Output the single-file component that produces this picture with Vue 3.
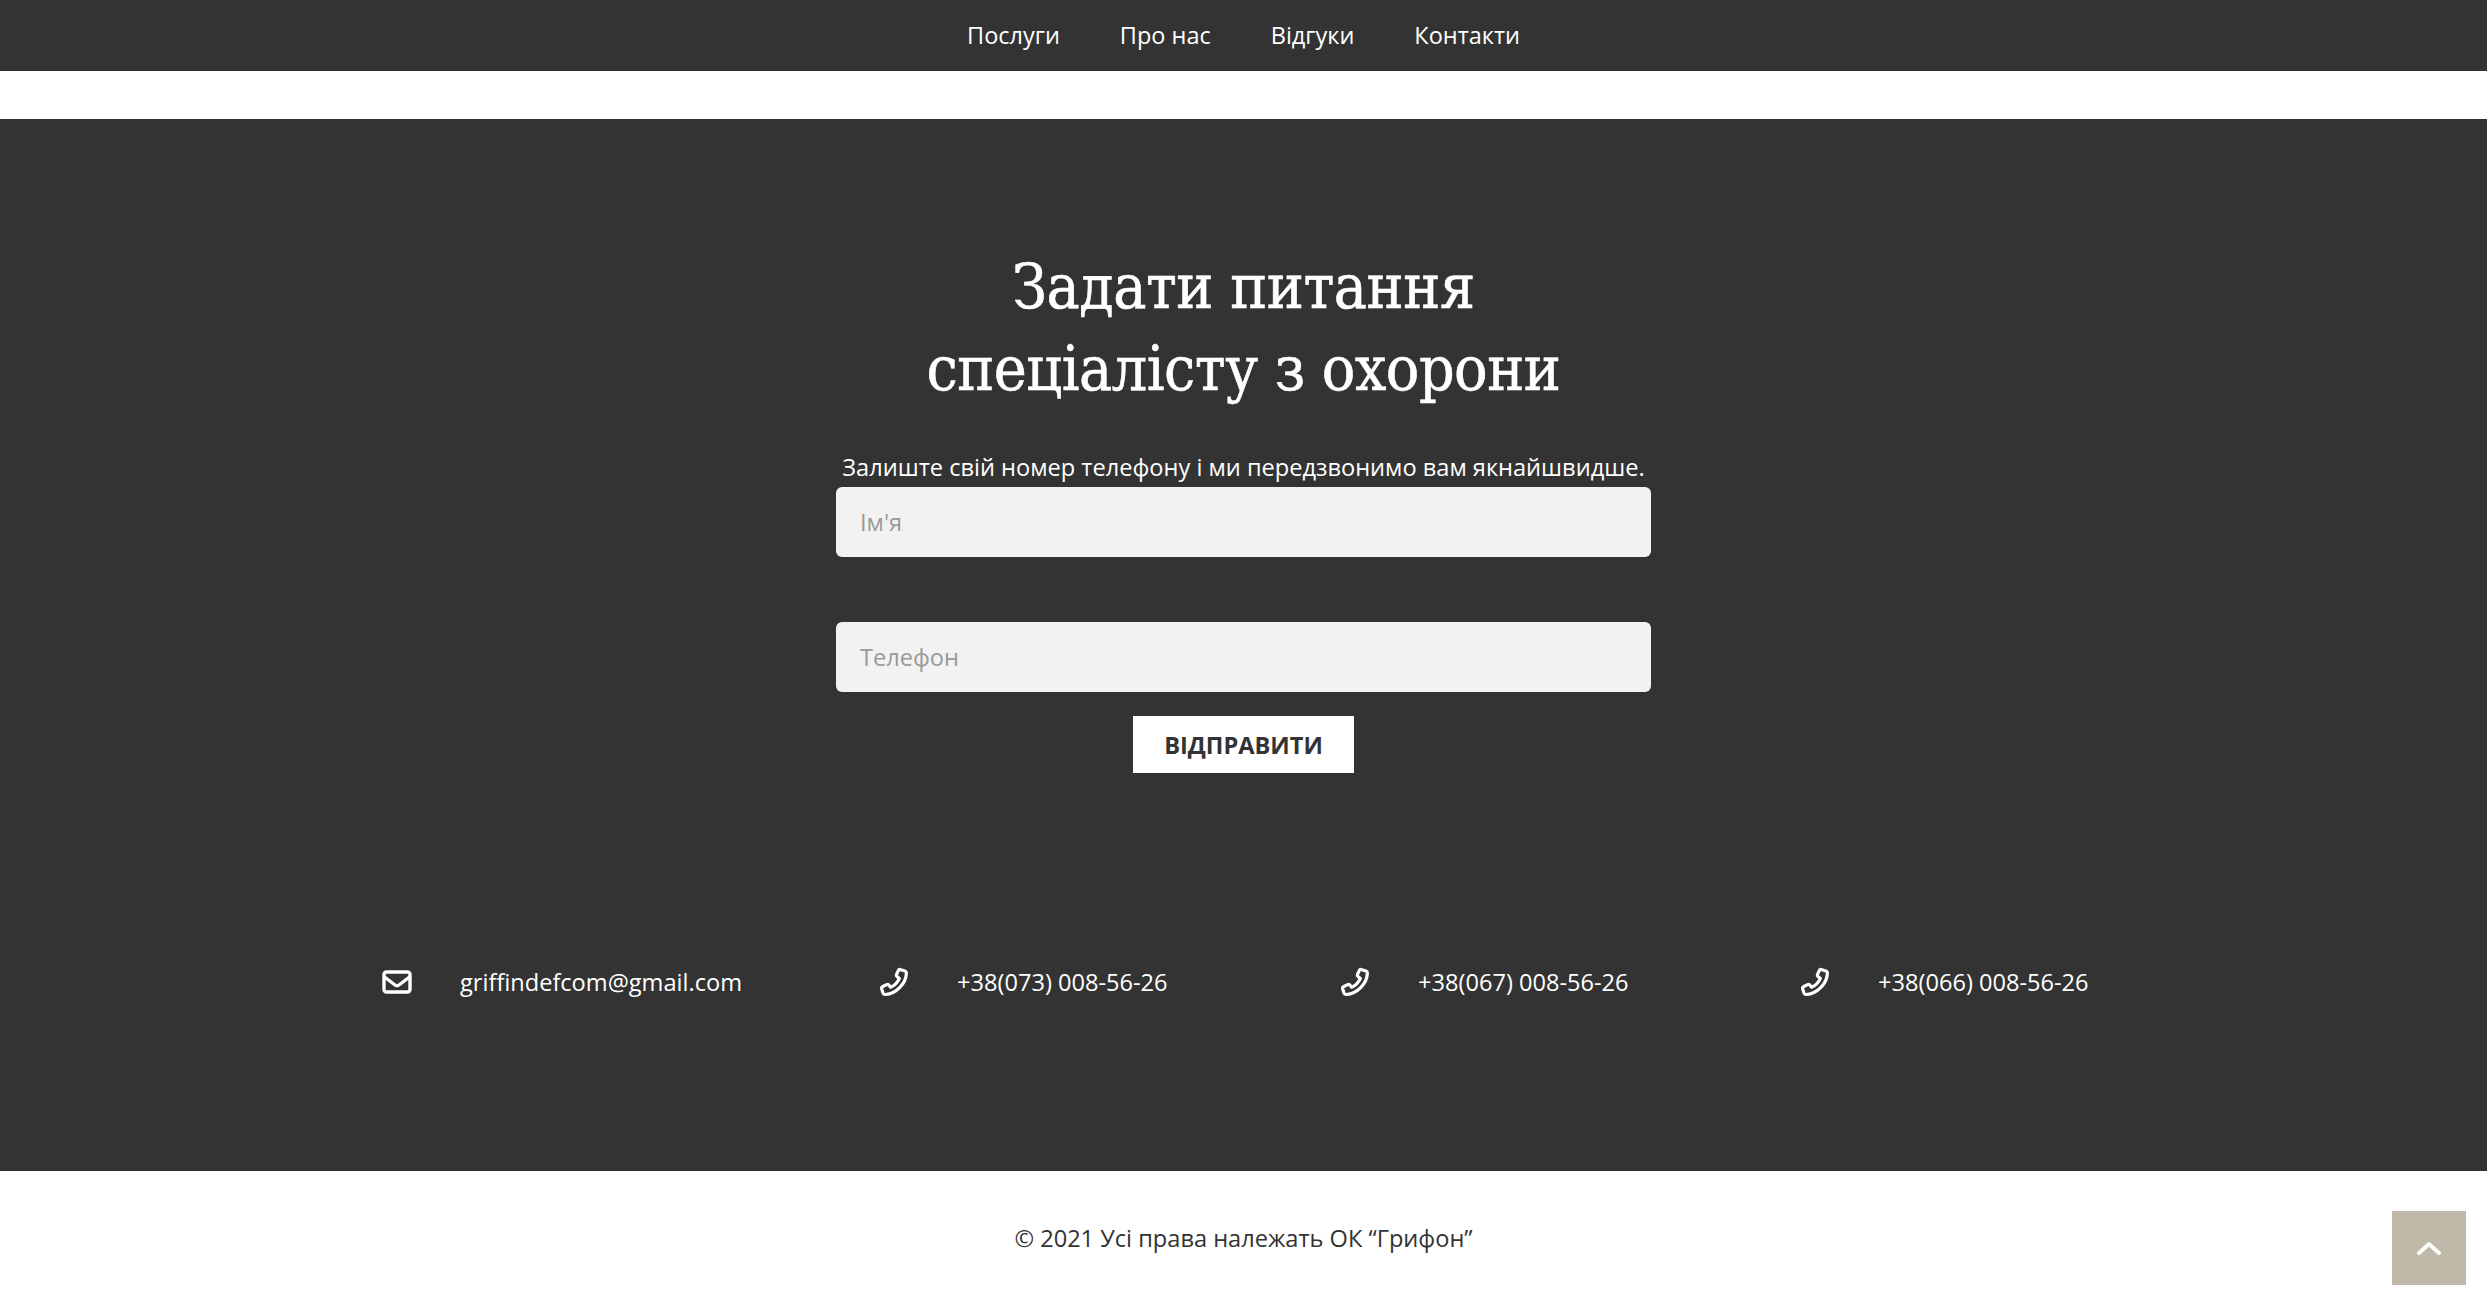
<template>
  <div class="page">
    <nav class="nav">
      <a v-for="item in navItems" :key="item" class="nav-link">{{ item }}</a>
    </nav>

    <section class="contact">
      <h2 class="title">Задати питання<br>спеціалісту з охорони</h2>
      <p class="lead">Залиште свій номер телефону і ми передзвонимо вам якнайшвидше.</p>
      <form class="form" @submit.prevent>
        <input class="field" type="text" placeholder="Ім'я">
        <input class="field" type="text" placeholder="Телефон">
        <button class="submit" type="submit">ВІДПРАВИТИ</button>
      </form>

      <div class="links">
        <div v-for="link in links" :key="link.text" class="link">
          <svg v-if="link.icon === 'mail'" class="icon" viewBox="0 0 30 30" fill="none" stroke="#fff" stroke-width="3.4" stroke-linejoin="round" stroke-linecap="round">
            <rect x="2" y="5" width="26" height="20" rx="2.5" />
            <path d="M2.5 10 L13 18 Q15 19.5 17 18 L27.5 10" />
          </svg>
          <svg v-else class="icon" viewBox="0 0 30 30" fill="none" stroke="#fff" stroke-width="3.2" stroke-linejoin="round" stroke-linecap="round">
            <path d="M21 2.5 L26 4 Q27.5 4.6 27.4 6.4 C26.8 17 17 27 6.5 27.5 Q4.6 27.6 4 26 L2.6 21.8 Q2.2 20.4 3.4 19.7 L7.6 17.6 Q8.9 17 9.8 18 L11.6 20.2 C15.5 18.6 18.8 15 20.4 11.4 L18 9.5 Q17 8.6 17.5 7.4 L19.4 3.4 Q20 2.2 21 2.5 Z" />
          </svg>
          <span class="link-text">{{ link.text }}</span>
        </div>
      </div>
    </section>

    <footer class="footer">© 2021 Усі права належать ОК “Грифон”</footer>

    <a class="to-top">
      <svg viewBox="0 0 24 14" width="24" height="14" fill="none" stroke="#fff" stroke-width="3.8" stroke-linecap="round" stroke-linejoin="round">
        <path d="M2 12 L12 3 L22 12" />
      </svg>
    </a>
  </div>
</template>

<script setup>
const navItems = ['Послуги', 'Про нас', 'Відгуки', 'Контакти']

const links = [
  { icon: 'mail', text: 'griffindefcom@gmail.com' },
  { icon: 'phone', text: '+38(073) 008-56-26' },
  { icon: 'phone', text: '+38(067) 008-56-26' },
  { icon: 'phone', text: '+38(066) 008-56-26' }
]
</script>

<style scoped>
.page {
  position: relative;
  height: 1300px;
  overflow: hidden;
  background: #fff;
  font-family: "Open Sans", "Noto Sans", sans-serif;
  color: #fff;
}

.nav {
  height: 71px;
  padding-bottom: 2px;
  box-sizing: border-box;
  display: flex;
  align-items: center;
  justify-content: center;
  gap: 60px;
  background: #333;
  font-size: 23.5px;
}

.nav-link {
  color: #fff;
}

.contact {
  margin-top: 48px;
  height: 1052px;
  box-sizing: border-box;
  padding-top: 127px;
  background: #333;
  display: flex;
  flex-direction: column;
  align-items: center;
}

.title {
  margin: 0;
  font-family: "DejaVu Serif Condensed", "DejaVu Serif", "Liberation Serif", serif;
  font-stretch: condensed;
  font-weight: 400;
  font-size: 62px;
  line-height: 82px;
  letter-spacing: -0.5px;
  -webkit-text-stroke: 0.6px #fff;
  text-align: center;
}

.lead {
  margin: 37px 0 0;
  font-size: 23.6px;
  line-height: 40px;
  text-align: center;
}

.form {
  display: flex;
  flex-direction: column;
  align-items: center;
  width: 815px;
}

.field {
  width: 100%;
  height: 70px;
  box-sizing: border-box;
  padding: 0 24px;
  margin-bottom: 65px;
  border: 0;
  border-radius: 6px;
  background: #f2f2f2;
  font-family: inherit;
  font-size: 23.6px;
  color: #333;
}

.field:nth-of-type(2) {
  margin-bottom: 24px;
}

.field::placeholder {
  color: #999;
  opacity: 1;
}

.submit {
  width: 221px;
  height: 57px;
  border: 0;
  background: #fff;
  color: #333;
  font-family: inherit;
  font-size: 23.6px;
  font-weight: 700;
}

.links {
  align-self: stretch;
  margin-top: 189px;
  padding-left: 382px;
  display: grid;
  grid-template-columns: 497px 461px 460px auto;
}

.link {
  display: flex;
  align-items: center;
  height: 40px;
}

.icon {
  width: 30px;
  height: 30px;
  flex: none;
  margin-right: 48px;
}

.link-text {
  font-size: 23.6px;
}

.footer {
  height: 129px;
  padding-top: 5px;
  box-sizing: border-box;
  display: flex;
  align-items: center;
  justify-content: center;
  color: #333;
  font-size: 23.6px;
}

.to-top {
  position: absolute;
  right: 21px;
  bottom: 15px;
  width: 74px;
  height: 74px;
  display: flex;
  align-items: center;
  justify-content: center;
  background: #c0b9aa;
}
</style>
